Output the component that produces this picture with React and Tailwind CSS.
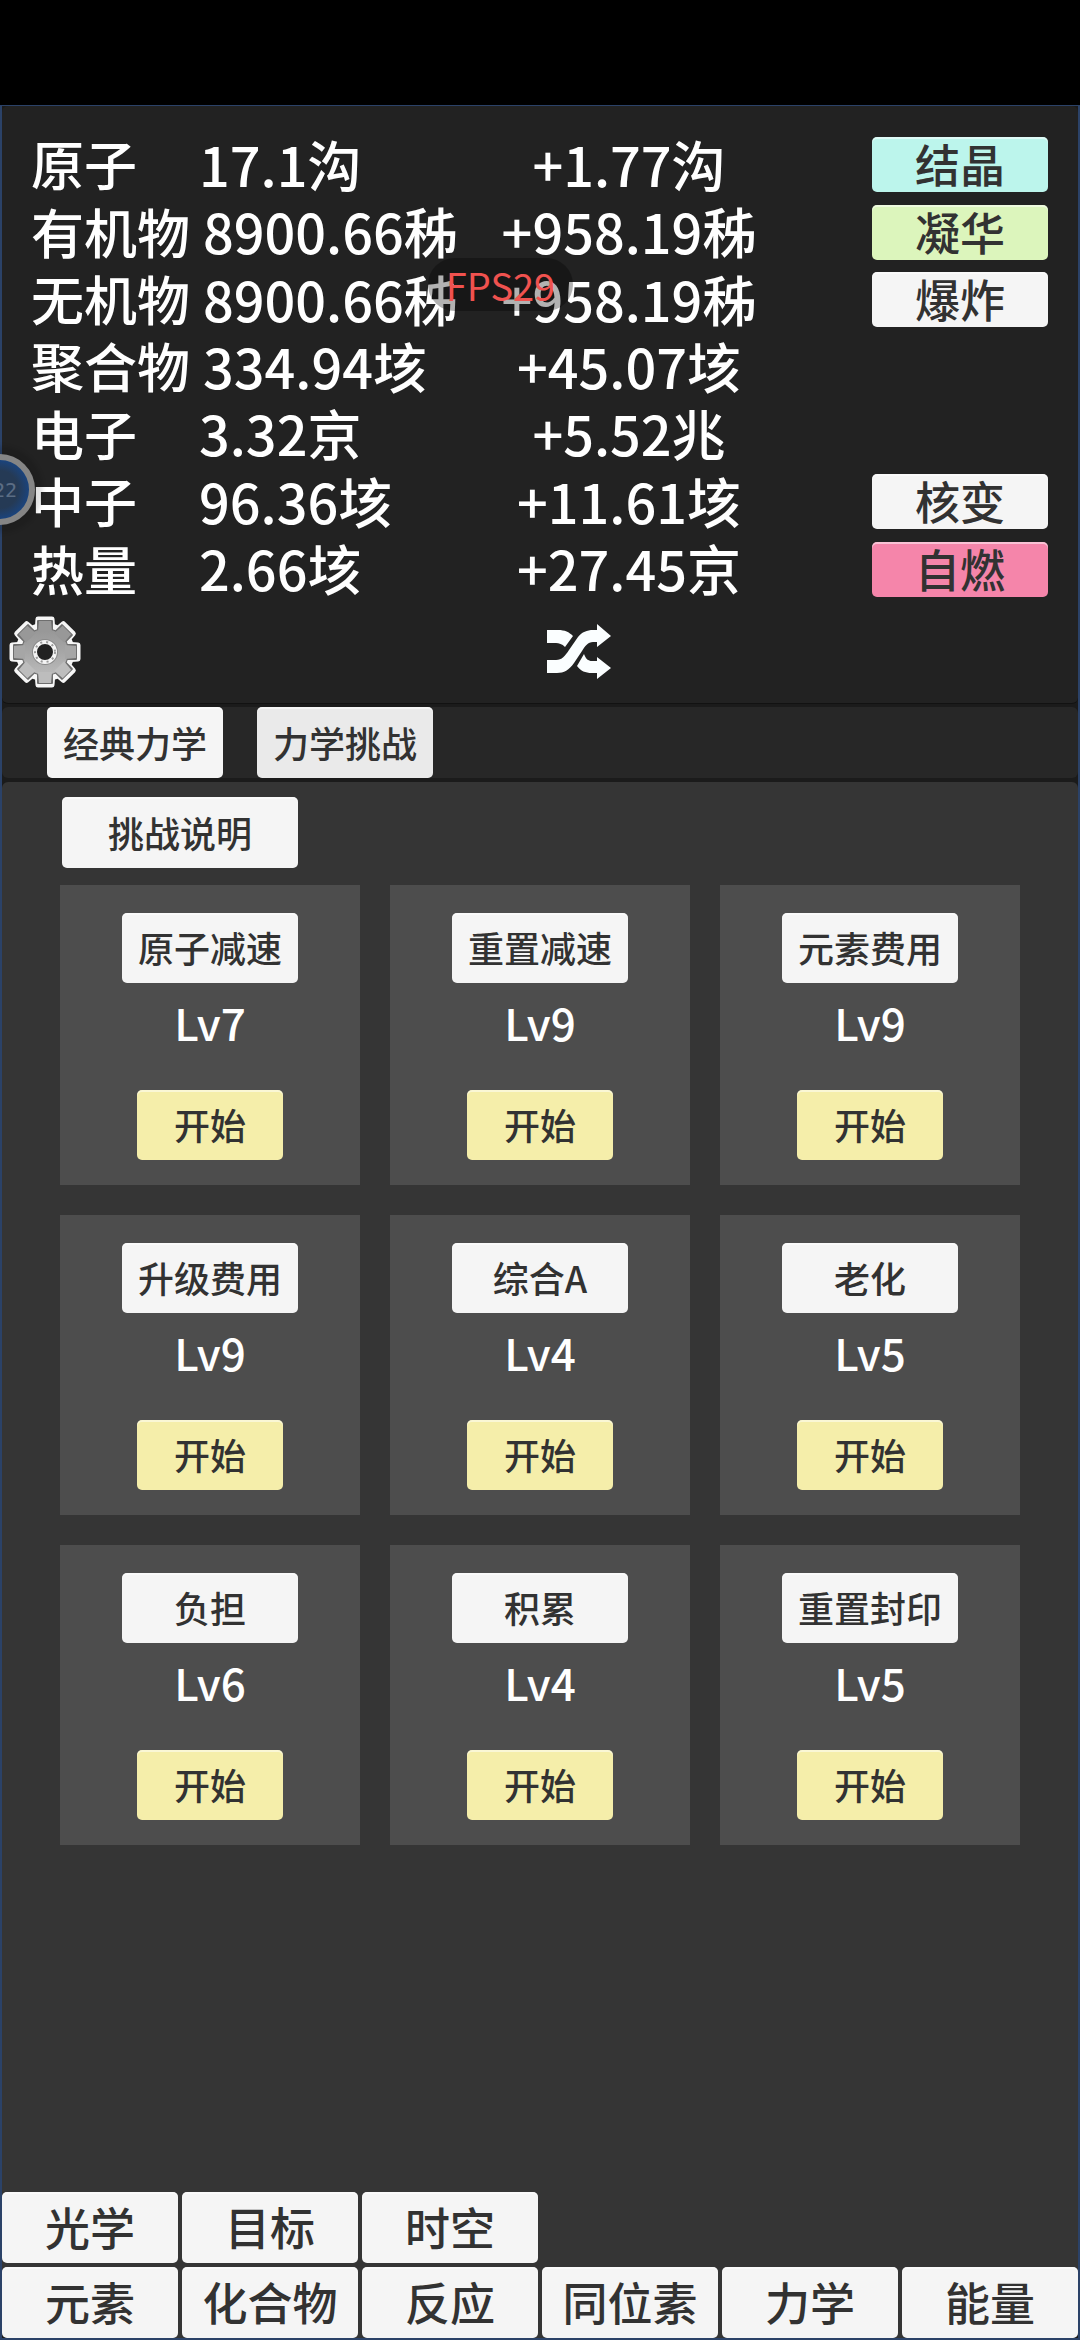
import clsx from 'clsx'

const RESOURCES = [
  { name: '原子',   amount: '17.1沟',    rate: '+1.77沟',   action: '结晶', color: 'bg-[#bcf5ec]' },
  { name: '有机物', amount: '8900.66秭', rate: '+958.19秭', action: '凝华', color: 'bg-[#dcf5bc]' },
  { name: '无机物', amount: '8900.66秭', rate: '+958.19秭', action: '爆炸', color: 'bg-[#f5f5f5]' },
  { name: '聚合物', amount: '334.94垓',  rate: '+45.07垓' },
  { name: '电子',   amount: '3.32京',    rate: '+5.52兆' },
  { name: '中子',   amount: '96.36垓',   rate: '+11.61垓',  action: '核变', color: 'bg-[#f5f5f5]' },
  { name: '热量',   amount: '2.66垓',    rate: '+27.45京',  action: '自燃', color: 'bg-[#f585aa]' },
]

const CHALLENGES = [
  { name: '原子减速', level: 7 },
  { name: '重置减速', level: 9 },
  { name: '元素费用', level: 9 },
  { name: '升级费用', level: 9 },
  { name: '综合A',    level: 4 },
  { name: '老化',     level: 5 },
  { name: '负担',     level: 6 },
  { name: '积累',     level: 4 },
  { name: '重置封印', level: 5 },
]

const NAV_TOP = ['光学', '目标', '时空']
const NAV_BOTTOM = ['元素', '化合物', '反应', '同位素', '力学', '能量']

function GameButton({ className, children }) {
  return (
    <button
      type="button"
      className={clsx(
        'flex items-center justify-center rounded-[5px] pb-0.5 font-medium text-[#323232] whitespace-nowrap shadow-[inset_0_2px_0_rgba(255,255,255,0.5)]',
        className
      )}
    >
      {children}
    </button>
  )
}

function GearIcon() {
  const teeth = [0, 45, 90, 135, 180, 225, 270, 315]
  return (
    <svg className="w-[72px] h-[76px]" viewBox="-36 -38 72 76" aria-hidden="true">
      <defs>
        <linearGradient id="gear" x1="0" y1="-34" x2="0" y2="34" gradientUnits="userSpaceOnUse">
          <stop offset="0" stopColor="#8f8f8f" />
          <stop offset="0.5" stopColor="#a6a6a6" />
          <stop offset="1" stopColor="#c4c4c4" />
        </linearGradient>
      </defs>
      <g fill="#f6f6f6" stroke="#f6f6f6" strokeWidth="5" strokeLinejoin="round">
        <circle r="27" />
        {teeth.map(a => <path key={a} d="M-8 -20L-7 -33H7L8 -20Z" transform={`rotate(${a})`} />)}
      </g>
      <g fill="#6e6e6e" stroke="#6e6e6e" strokeWidth="2" strokeLinejoin="round">
        <circle r="23" />
        {teeth.map(a => <path key={a} d="M-7 -19V-31H7V-19Z" transform={`rotate(${a})`} />)}
      </g>
      <circle r="23" fill="url(#gear)" />
      {teeth.map(a => {
        const shade = a > 90 && a < 270 ? '#bdbdbd' : a === 90 || a === 270 ? '#a6a6a6' : '#989898'
        return <path key={a} d="M-7 -20L-6 -31H6L7 -20Z" fill={shade} transform={`rotate(${a})`} />
      })}
      <circle r="13" fill="#8a8a8a" />
      <circle r="10" fill="#222222" stroke="#f4f4f4" strokeWidth="4" />
      <circle r="10" fill="none" stroke="#9a9a9a" strokeWidth="2" strokeDasharray="2 4" />
    </svg>
  )
}

function ShuffleIcon() {
  return (
    <svg className="w-16 h-14" viewBox="0 0 64 56" fill="#fbfeff" aria-hidden="true">
      <path d="M0 6H11C18 6 22 8 26 12L18 23C15 20 12 19 9 19H0Z" />
      <path d="M0 36H9C15 36 18 32 22 26L31 13C35 8 40 6 46 6H50V0L64 12L50 23V18H46C41 18 38 22 35 27L27 39C22 46 17 49 10 49H0Z" />
      <path d="M30 42L37 30C39 35 41 37 45 37H50V33L64 44L50 55V49H45C38 49 34 47 30 42Z" />
    </svg>
  )
}

function ResourceTable() {
  return (
    <table className="w-full h-[472px] table-fixed border-collapse text-[54px] leading-none font-medium text-white">
      <colgroup>
        <col className="w-[168px]" />
        <col className="w-[270px]" />
        <col className="w-[320px]" />
        <col />
      </colgroup>
      <tbody>
        {RESOURCES.map(r => (
          <tr key={r.name}>
            <th scope="row" className="p-0 pb-0.5 text-left text-[53px] font-medium whitespace-nowrap">{r.name}</th>
            <td className={clsx('p-0 pb-0.5 whitespace-nowrap', r.name.length > 2 && 'pl-1')}>{r.amount}</td>
            <td className="p-0 pb-0.5 text-center whitespace-nowrap">{r.rate}</td>
            <td className="p-0">
              {r.action && (
                <GameButton className={clsx('ml-auto w-44 h-[55px] text-[45px] leading-none', r.color)}>
                  {r.action}
                </GameButton>
              )}
            </td>
          </tr>
        ))}
      </tbody>
    </table>
  )
}

function ChallengeCard({ challenge }) {
  return (
    <div className="flex flex-col items-center bg-[#4d4d4d] pt-7 pb-[25px]">
      <GameButton className="w-44 h-[70px] bg-[#f5f5f5] text-[36px]">{challenge.name}</GameButton>
      <p className="mt-1.5 text-[44px] leading-[66px] font-medium text-white">Lv{challenge.level}</p>
      <GameButton className="mt-[35px] w-[146px] h-[70px] bg-[#f5eeaa] text-[36px]">开始</GameButton>
    </div>
  )
}

function NavRow({ items }) {
  return (
    <div className="grid grid-cols-6 gap-1">
      {items.map(item => (
        <GameButton key={item} className="h-[71px] bg-[#f5f5f5] text-[45px] leading-none">{item}</GameButton>
      ))}
    </div>
  )
}

export default function App() {
  return (
    <div className="relative flex flex-col min-h-screen overflow-hidden bg-black pt-[105px] font-['Noto_Sans_CJK_SC',sans-serif]">
      <div className="flex flex-col flex-1 border-x-2 border-t border-b-2 border-[#2b4268] bg-[#1b1b1b]">
        <header className="rounded-md border-b border-[#121212] bg-[#222222]">
          <div className="pt-[25px] pl-[29px] pr-[30px]">
            <ResourceTable />
          </div>
          <div className="flex items-center h-[100px] pl-[7px] pb-[2px]">
            <button type="button" aria-label="设置"><GearIcon /></button>
            <button type="button" aria-label="切换" className="ml-[466px]"><ShuffleIcon /></button>
          </div>
        </header>

        {/* Tabs */}
        <nav className="flex gap-[34px] mt-[3px] rounded-md bg-[#272727] px-[45px]">
          <GameButton className="w-44 h-[71px] bg-[#f5f5f5] text-[36px]">经典力学</GameButton>
          <GameButton className="w-44 h-[71px] bg-[#eaeaea] text-[36px]">力学挑战</GameButton>
        </nav>

        <main className="flex flex-col flex-1 mt-1 rounded-md bg-[#353535]">
          <div className="px-[58px] pt-[15px]">
            <GameButton className="ml-0.5 w-[236px] h-[71px] bg-[#f5f5f5] text-[36px]">挑战说明</GameButton>
            <div className="grid grid-cols-3 gap-[30px] mt-[17px]">
              {CHALLENGES.map(c => <ChallengeCard key={c.name} challenge={c} />)}
            </div>
          </div>

          <div className="flex flex-col gap-1 mt-auto">
            <NavRow items={NAV_TOP} />
            <NavRow items={NAV_BOTTOM} />
          </div>
        </main>
      </div>

      {/* Floating overlays */}
      <div className="absolute top-[258px] left-[428px] w-[145px] h-[53px] rounded-full bg-black/30 text-center text-[38px] leading-[53px] text-[#f0524f]">
        FPS29
      </div>
      <div className="absolute top-[454px] -left-9 flex items-center justify-end w-[71px] h-[71px] rounded-full border-[6px] border-[#858585] bg-radial from-[#253a55] from-45% to-[#1a437c] to-70% pr-3 font-['DejaVu_Sans_Mono',monospace] text-[20px] text-[#5b6d84] shadow-[0_0_4px_8px_rgba(0,0,0,0.12)]">
        22
      </div>
    </div>
  )
}
